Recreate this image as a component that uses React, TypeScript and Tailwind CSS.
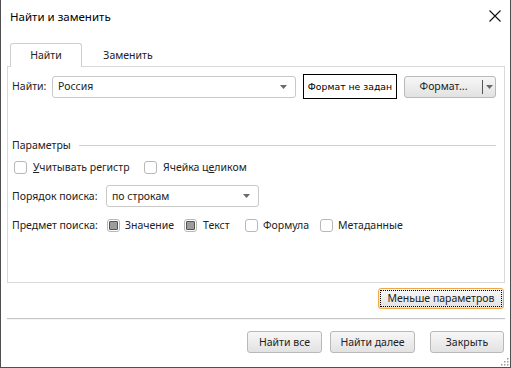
import React from "react";

const font = { fontFamily: '"Noto Sans", Arial, sans-serif' };

function Arrow({ className = "" }: { className?: string }) {
  return (
    <svg width="7" height="4" viewBox="0 0 7 4" className={className}>
      <path d="M0 0 H7 L3.5 4 Z" fill="#6a6a6a" />
    </svg>
  );
}

function Check({ checked = false }: { checked?: boolean }) {
  return (
    <span className="w-[13px] h-[13px] border border-[#b8b8b8] rounded-[3px] bg-white flex items-center justify-center shrink-0">
      {checked && <span className="w-[9px] h-[9px] bg-[#9c9c9c] border border-[#555] rounded-[1px]" />}
    </span>
  );
}

function Btn({ children, className = "" }: { children: React.ReactNode; className?: string }) {
  return (
    <div
      className={
        "h-[22px] flex items-center justify-center border border-[#b9b9b9] rounded-[3px] bg-gradient-to-b from-[#f7f7f7] to-[#e2e2e2] " +
        className
      }
    >
      {children}
    </div>
  );
}

export default function App() {
  return (
    <div
      style={font}
      className="w-[511px] h-[368px] bg-white border-x border-b border-[#4f4f4f] flex flex-col text-[10.5px] leading-[15px] text-[#222] relative overflow-hidden"
    >
      {/* title */}
      <div className="h-[32px] flex items-center justify-between pl-[9px] pr-[9px]">
        <span className="text-[11.5px] text-black">Найти и заменить</span>
        <svg width="12" height="12" viewBox="0 0 12 12">
          <path d="M0.5 0.5 L11.5 11.5 M11.5 0.5 L0.5 11.5" stroke="#111" strokeWidth="1.1" />
        </svg>
      </div>

      <div className="pl-[6px] pr-[5px] flex flex-col">
        {/* tabs */}
        <div className="mt-[11px] flex items-end pl-[3px] relative z-10 -mb-px">
          <div className="w-[72px] h-[24px] border border-b-0 border-[#cfcfcf] rounded-t-[3px] bg-white flex items-center justify-center">
            Найти
          </div>
          <div className="w-[92px] h-[24px] flex items-center justify-center">Заменить</div>
        </div>

        {/* panel */}
        <div className="h-[217px] border border-[#d9d9d9] flex flex-col pl-[4px] pr-[8px]">
          <div className="mt-[7px] h-[25px] flex items-center">
            <span className="w-[40px]">Найти:</span>
            <div className="w-[244px] h-[22px] border border-[#c9c9c9] rounded-[3px] flex items-center justify-between pl-[5px] pr-[8px]">
              <span>Россия</span>
              <Arrow />
            </div>
            <div
              style={{ fontFamily: '"DejaVu Sans", Verdana, sans-serif' }}
              className="ml-[7px] w-[94px] h-[25px] border border-black flex items-center justify-center text-[9.3px] text-black"
            >
              Формат не задан
            </div>
            <div className="ml-[7px] w-[92px] h-[22px] flex border border-[#b9b9b9] rounded-[3px] bg-gradient-to-b from-[#f7f7f7] to-[#e2e2e2]">
              <div className="flex-1 flex items-center justify-center">Формат...</div>
              <div className="w-px my-[3px] bg-[#555]" />
              <div className="w-[12px] flex items-center justify-center">
                <Arrow />
              </div>
            </div>
          </div>

          <div className="mt-[38px] h-[16px] flex items-center">
            <span>Параметры</span>
            <div className="flex-1 ml-[8px] h-px bg-[#cfcfcf]" />
          </div>

          <div className="mt-[6px] h-[16px] flex items-center pl-[2px]">
            <div className="w-[130px] flex items-center gap-[6px]">
              <Check />
              <span>
                <span className="underline">У</span>читывать регистр
              </span>
            </div>
            <div className="flex items-center gap-[6px]">
              <Check />
              <span>
                Ячейка ц<span className="underline">е</span>ликом
              </span>
            </div>
          </div>

          <div className="mt-[10px] h-[22px] flex items-center">
            <span className="w-[94px]">Порядок поиска:</span>
            <div className="w-[153px] h-[22px] border border-[#c9c9c9] rounded-[3px] flex items-center justify-between pl-[5px] pr-[8px]">
              <span>по строкам</span>
              <Arrow />
            </div>
          </div>

          <div className="mt-[10px] h-[16px] flex items-center">
            <span className="w-[95px]">Предмет поиска:</span>
            <div className="w-[77px] flex items-center gap-[5px]">
              <Check checked />
              <span>Значение</span>
            </div>
            <div className="w-[61px] flex items-center gap-[6px]">
              <Check checked />
              <span>Текст</span>
            </div>
            <div className="w-[75px] flex items-center gap-[5px]">
              <Check />
              <span>Формула</span>
            </div>
            <div className="flex items-center gap-[5px]">
              <Check />
              <span>Метаданные</span>
            </div>
          </div>
        </div>

        {/* less params */}
        <div className="mt-[5px] flex justify-end pr-[1px]">
          <div className="w-[126px] h-[21px] border border-[#f0a848] rounded-[3px] bg-gradient-to-b from-[#f7f7f7] to-[#e2e2e2] p-[1px]">
            <div className="w-full h-full border border-dotted border-black flex items-center justify-center">
              Меньше параметров
            </div>
          </div>
        </div>

        <div className="mt-[9px] h-px bg-[#c6c6c6]" />
        <div className="h-px bg-[#f4f4f4]" />

        <div className="mt-[11px] flex justify-end pr-[1px]">
          <Btn className="w-[75px]">Найти все</Btn>
          <Btn className="ml-[8px] w-[85px]">Найти далее</Btn>
          <Btn className="ml-[15px] w-[74px]">Закрыть</Btn>
        </div>
      </div>

      {/* resize grip */}
      <svg width="10" height="10" viewBox="0 0 10 10" className="absolute right-[1px] bottom-[1px]">
        {[
          [8, 2],
          [8, 5],
          [5, 5],
          [8, 8],
          [5, 8],
          [2, 8],
        ].map(([x, y], i) => (
          <rect key={i} x={x} y={y} width="1.5" height="1.5" fill="#9a9a9a" />
        ))}
      </svg>
    </div>
  );
}
